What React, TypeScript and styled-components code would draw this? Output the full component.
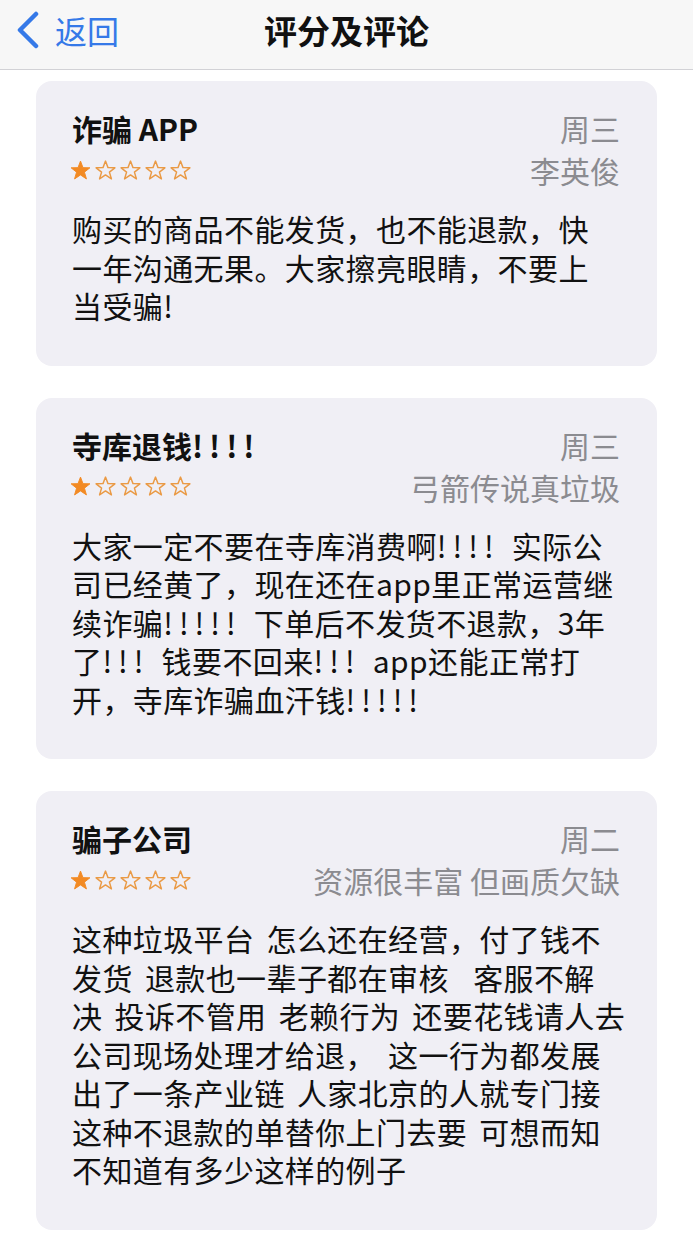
import React from 'react';
import styled, { createGlobalStyle } from 'styled-components';

const GlobalStyle = createGlobalStyle`
  body {
    margin: 0;
    background: #ffffff;
    font-family: "Noto Sans CJK SC", "Noto Sans", sans-serif;
    color: #111111;
  }
`;

const Screen = styled.div`
  width: 693px;
  min-height: 1242px;
  background: #ffffff;
`;

const NavBar = styled.header`
  height: 70px;
  box-sizing: border-box;
  display: grid;
  grid-template-columns: 1fr auto 1fr;
  align-items: center;
  background: #f7f7f7;
  border-bottom: 1px solid #d2d2d6;
`;

const BackButton = styled.button`
  justify-self: start;
  display: flex;
  align-items: center;
  gap: 15px;
  padding: 0 0 0 16px;
  margin-top: -10px;
  border: none;
  background: none;
  color: #3579e8;
  font-family: inherit;
  font-size: 32px;
  line-height: 40px;
  cursor: pointer;
`;

const NavTitle = styled.h1`
  margin: -10px 0 0;
  font-size: 33px;
  font-weight: 700;
  line-height: 40px;
  color: #111111;
`;

const List = styled.main`
  display: flex;
  flex-direction: column;
  gap: 32px;
  padding: 11px 36px 20px;
`;

const Card = styled.article`
  background: #f0eff5;
  border-radius: 16px;
  padding: 26px 37px 41px 36px;
`;

const Header = styled.div`
  display: grid;
  grid-template-columns: 1fr auto;
  grid-auto-rows: 42px;
  align-items: center;
`;

const Title = styled.h2`
  margin: 0;
  font-size: 30px;
  font-weight: 700;
  line-height: 42px;
  white-space: nowrap;
`;

const Meta = styled.div`
  justify-self: end;
  font-size: 30px;
  line-height: 42px;
  color: #8b8b90;
  white-space: nowrap;
`;

const Bang = styled.span`
  letter-spacing: 0.2em;
`;

const Stars = styled.div`
  display: flex;
  gap: 2px;
  margin-left: -3px;
`;

const Body = styled.p`
  margin: 18px 0 0;
  font-size: 30px;
  line-height: 38.5px;
  letter-spacing: 0.4px;
  word-spacing: 5px;
  white-space: pre;
  color: #111111;
`;

type Review = {
  title: string;
  date: string;
  author: string;
  rating: number;
  body: string[];
};

const reviews: Review[] = [
  {
    title: '诈骗 APP',
    date: '周三',
    author: '李英俊',
    rating: 1,
    body: [
      '购买的商品不能发货，也不能退款，快',
      '一年沟通无果。大家擦亮眼睛，不要上',
      '当受骗!',
    ],
  },
  {
    title: '寺库退钱!!!!',
    date: '周三',
    author: '弓箭传说真垃圾',
    rating: 1,
    body: [
      '大家一定不要在寺库消费啊!!!! 实际公',
      '司已经黄了，现在还在app里正常运营继',
      '续诈骗!!!!! 下单后不发货不退款，3年',
      '了!!! 钱要不回来!!! app还能正常打',
      '开，寺库诈骗血汗钱!!!!!',
    ],
  },
  {
    title: '骗子公司',
    date: '周二',
    author: '资源很丰富 但画质欠缺',
    rating: 1,
    body: [
      '这种垃圾平台 怎么还在经营，付了钱不',
      '发货 退款也一辈子都在审核  客服不解',
      '决 投诉不管用 老赖行为 还要花钱请人去',
      '公司现场处理才给退， 这一行为都发展',
      '出了一条产业链 人家北京的人就专门接',
      '这种不退款的单替你上门去要 可想而知',
      '不知道有多少这样的例子',
    ],
  },
];

// spread out runs of "!" the way the iOS font draws them
const withBangs = (text: string) =>
  text.split(/(!+)/).map((part, i) =>
    part.startsWith('!') ? <Bang key={i}>{part}</Bang> : <React.Fragment key={i}>{part}</React.Fragment>
  );

const Star = ({ filled }: { filled: boolean }) => (
  <svg width="23" height="23" viewBox="0 0 24 24">
    <polygon
      points="12,2.2 14.6,9 21.8,9.2 16.1,13.7 18.2,20.8 12,16.6 5.8,20.8 7.9,13.7 2.2,9.2 9.4,9"
      fill={filled ? '#f28a24' : 'none'}
      stroke={filled ? '#f28a24' : '#ea9a45'}
      strokeWidth={filled ? 1 : 1.5}
      strokeLinejoin="round"
    />
  </svg>
);

const ReviewCard = ({ review }: { review: Review }) => (
  <Card>
    <Header>
      <Title>{withBangs(review.title)}</Title>
      <Meta>{review.date}</Meta>
      <Stars>
        {[0, 1, 2, 3, 4].map((i) => (
          <Star key={i} filled={i < review.rating} />
        ))}
      </Stars>
      <Meta>{review.author}</Meta>
    </Header>
    <Body>{withBangs(review.body.join('\n'))}</Body>
  </Card>
);

const App: React.FC = () => (
  <Screen>
    <GlobalStyle />
    <NavBar>
      <BackButton>
        <svg width="24" height="38" viewBox="0 0 24 38">
          <polyline
            points="20,3 4,19 20,35"
            fill="none"
            stroke="#3579e8"
            strokeWidth="4.5"
            strokeLinecap="round"
            strokeLinejoin="round"
          />
        </svg>
        返回
      </BackButton>
      <NavTitle>评分及评论</NavTitle>
      <span />
    </NavBar>
    <List>
      {reviews.map((r) => (
        <ReviewCard key={r.title} review={r} />
      ))}
    </List>
  </Screen>
);

export default App;
